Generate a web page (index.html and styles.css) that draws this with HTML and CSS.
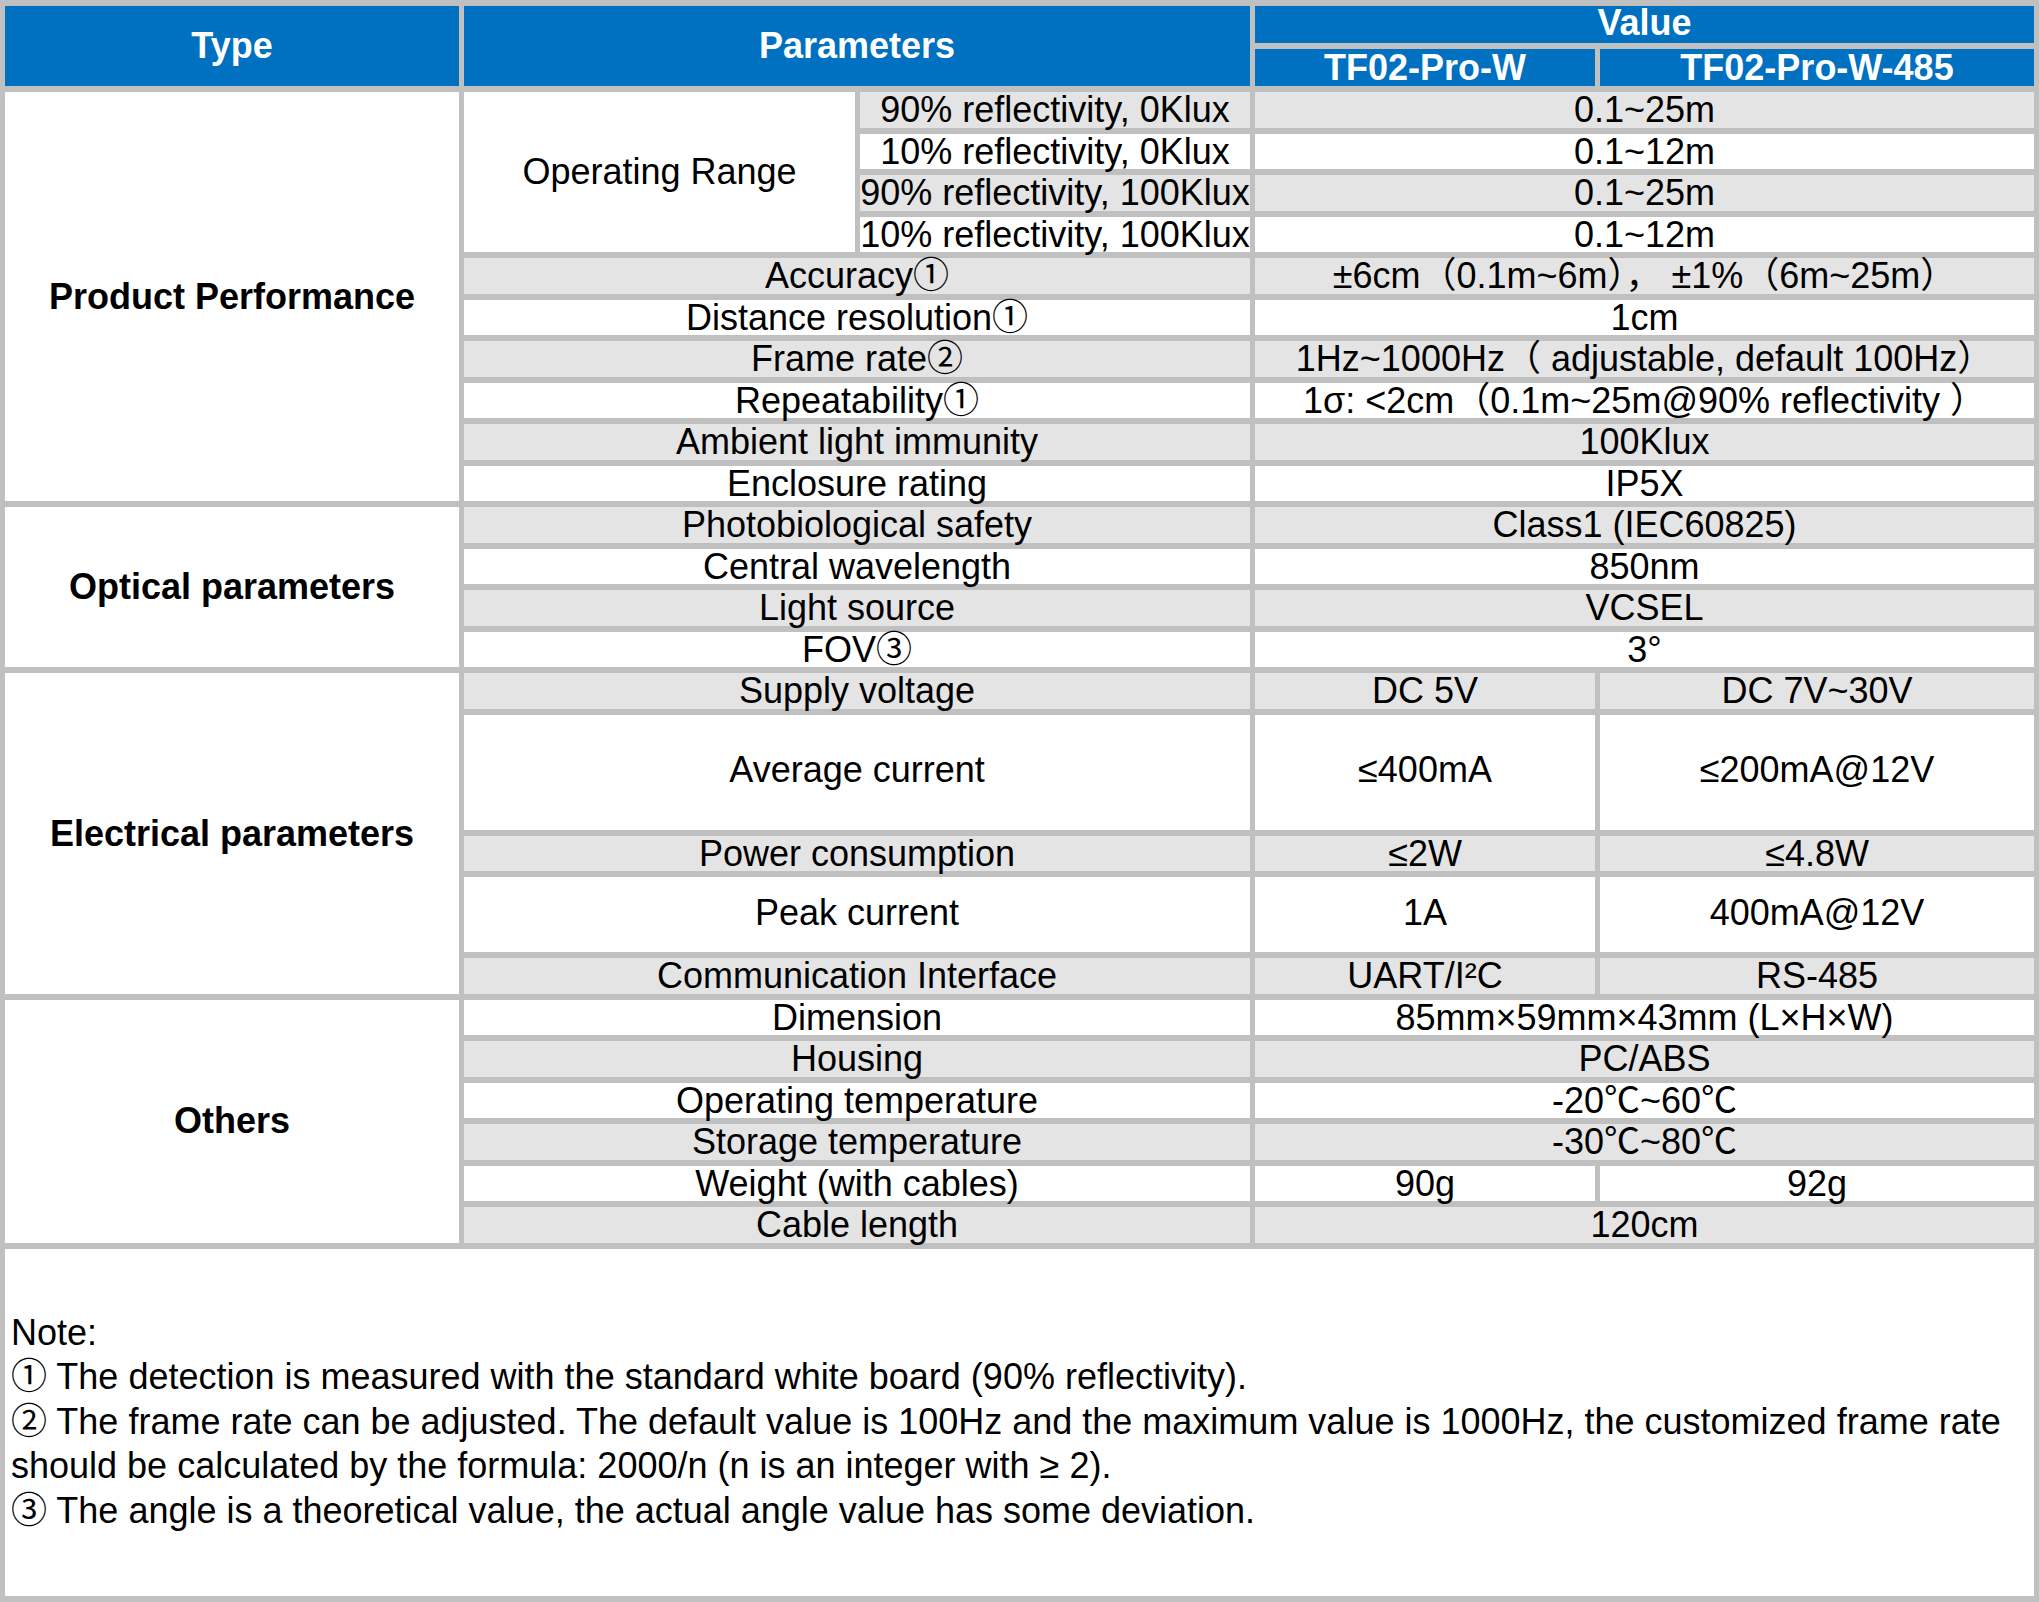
FILE: index.html
```html
<!DOCTYPE html>
<html lang="en">
<head>
<meta charset="utf-8">
<title>TF02-Pro-W Specifications</title>
<link rel="stylesheet" href="styles.css">
</head>
<body>
<table class="spec">
  <colgroup>
    <col class="c-type">
    <col class="c-param1">
    <col class="c-param2">
    <col class="c-val1">
    <col class="c-val2">
  </colgroup>
  <thead>
    <tr class="h1">
      <th rowspan="2" class="hd">Type</th>
      <th rowspan="2" colspan="2" class="hd">Parameters</th>
      <th colspan="2" class="hd hd-value">Value</th>
    </tr>
    <tr class="h2">
      <th class="hd">TF02-Pro-W</th>
      <th class="hd">TF02-Pro-W-485</th>
    </tr>
  </thead>
  <tbody>
    <tr>
      <td rowspan="10" class="type">Product Performance</td>
      <td rowspan="4" class="white">Operating Range</td>
      <td class="grey">90% reflectivity, 0Klux</td>
      <td colspan="2" class="grey">0.1~25m</td>
    </tr>
    <tr>
      <td class="white">10% reflectivity, 0Klux</td>
      <td colspan="2" class="white">0.1~12m</td>
    </tr>
    <tr>
      <td class="grey">90% reflectivity, 100Klux</td>
      <td colspan="2" class="grey">0.1~25m</td>
    </tr>
    <tr>
      <td class="white">10% reflectivity, 100Klux</td>
      <td colspan="2" class="white">0.1~12m</td>
    </tr>
    <tr>
      <td colspan="2" class="grey">Accuracy①</td>
      <td colspan="2" class="grey">±6cm（0.1m~6m）， ±1%（6m~25m）</td>
    </tr>
    <tr>
      <td colspan="2" class="white">Distance resolution①</td>
      <td colspan="2" class="white">1cm</td>
    </tr>
    <tr>
      <td colspan="2" class="grey">Frame rate②</td>
      <td colspan="2" class="grey">1Hz~1000Hz（ adjustable, default 100Hz）</td>
    </tr>
    <tr>
      <td colspan="2" class="white">Repeatability①</td>
      <td colspan="2" class="white">1σ: &lt;2cm（0.1m~25m@90% reflectivity ）</td>
    </tr>
    <tr>
      <td colspan="2" class="grey">Ambient light immunity</td>
      <td colspan="2" class="grey">100Klux</td>
    </tr>
    <tr>
      <td colspan="2" class="white">Enclosure rating</td>
      <td colspan="2" class="white">IP5X</td>
    </tr>
    <tr>
      <td rowspan="4" class="type">Optical parameters</td>
      <td colspan="2" class="grey">Photobiological safety</td>
      <td colspan="2" class="grey">Class1 (IEC60825)</td>
    </tr>
    <tr>
      <td colspan="2" class="white">Central wavelength</td>
      <td colspan="2" class="white">850nm</td>
    </tr>
    <tr>
      <td colspan="2" class="grey">Light source</td>
      <td colspan="2" class="grey">VCSEL</td>
    </tr>
    <tr>
      <td colspan="2" class="white">FOV③</td>
      <td colspan="2" class="white">3°</td>
    </tr>
    <tr>
      <td rowspan="5" class="type">Electrical parameters</td>
      <td colspan="2" class="grey">Supply voltage</td>
      <td class="grey">DC 5V</td>
      <td class="grey">DC 7V~30V</td>
    </tr>
    <tr class="tall-xl">
      <td colspan="2" class="white">Average current</td>
      <td class="white">≤400mA</td>
      <td class="white">≤200mA@12V</td>
    </tr>
    <tr>
      <td colspan="2" class="grey">Power consumption</td>
      <td class="grey">≤2W</td>
      <td class="grey">≤4.8W</td>
    </tr>
    <tr class="tall-l">
      <td colspan="2" class="white">Peak current</td>
      <td class="white">1A</td>
      <td class="white">400mA@12V</td>
    </tr>
    <tr>
      <td colspan="2" class="grey">Communication Interface</td>
      <td class="grey">UART/I²C</td>
      <td class="grey">RS-485</td>
    </tr>
    <tr>
      <td rowspan="6" class="type">Others</td>
      <td colspan="2" class="white">Dimension</td>
      <td colspan="2" class="white">85mm×59mm×43mm (L×H×W)</td>
    </tr>
    <tr>
      <td colspan="2" class="grey">Housing</td>
      <td colspan="2" class="grey">PC/ABS</td>
    </tr>
    <tr>
      <td colspan="2" class="white">Operating temperature</td>
      <td colspan="2" class="white">-20℃~60℃</td>
    </tr>
    <tr>
      <td colspan="2" class="grey">Storage temperature</td>
      <td colspan="2" class="grey">-30℃~80℃</td>
    </tr>
    <tr>
      <td colspan="2" class="white">Weight (with cables)</td>
      <td class="white">90g</td>
      <td class="white">92g</td>
    </tr>
    <tr>
      <td colspan="2" class="grey">Cable length</td>
      <td colspan="2" class="grey">120cm</td>
    </tr>
    <tr class="notes-row">
      <td colspan="5" class="notes">
        <div class="note-line">Note:</div>
        <div class="note-line">① The detection is measured with the standard white board (90% reflectivity).</div>
        <div class="note-line">② The frame rate can be adjusted. The default value is 100Hz and the maximum value is 1000Hz, the customized frame rate</div>
        <div class="note-line">should be calculated by the formula: 2000/n (n is an integer with ≥ 2).</div>
        <div class="note-line">③ The angle is a theoretical value, the actual angle value has some deviation.</div>
      </td>
    </tr>
  </tbody>
</table>
</body>
</html>
```

FILE: styles.css
```css
html, body {
  margin: 0;
  padding: 0;
  background: #ffffff;
}

body {
  font-family: "Liberation Sans", Arial, "Noto Sans CJK SC", sans-serif;
  font-size: 36px;
  color: #000000;
}

.spec {
  width: 2039px;
  table-layout: fixed;
  border-collapse: separate;
  border-spacing: 5px 6px;
  background: #c0c0c0;
}

.c-type { width: 454px; }
.c-param1 { width: 391px; }
.c-param2 { width: 390px; }
.c-val1 { width: 340px; }
.c-val2 { width: 434px; }

.spec th,
.spec td {
  padding: 0;
  text-align: center;
  vertical-align: middle;
  white-space: nowrap;
  line-height: 35.5px;
  height: 35.5px;
  overflow: visible;
}

.h1 th, .h2 th { height: 37px; }

.hd {
  background: #0070c0;
  color: #ffffff;
  font-weight: bold;
}

.spec th.hd-value {
  height: 33px;
  padding-bottom: 4px;
  line-height: 33px;
}

.grey { background: #e4e4e4; }
.white { background: #ffffff; }

.type {
  background: #ffffff;
  font-weight: bold;
}

.spec .tall-xl td { height: 111px; padding-bottom: 4px; }
.spec .tall-l td { height: 71px; padding-bottom: 4px; }

.spec td.notes {
  height: 347px;
  background: #ffffff;
  text-align: left;
  padding-left: 6px;
  line-height: 44.5px;
}

.note-line {
  white-space: nowrap;
}
```
